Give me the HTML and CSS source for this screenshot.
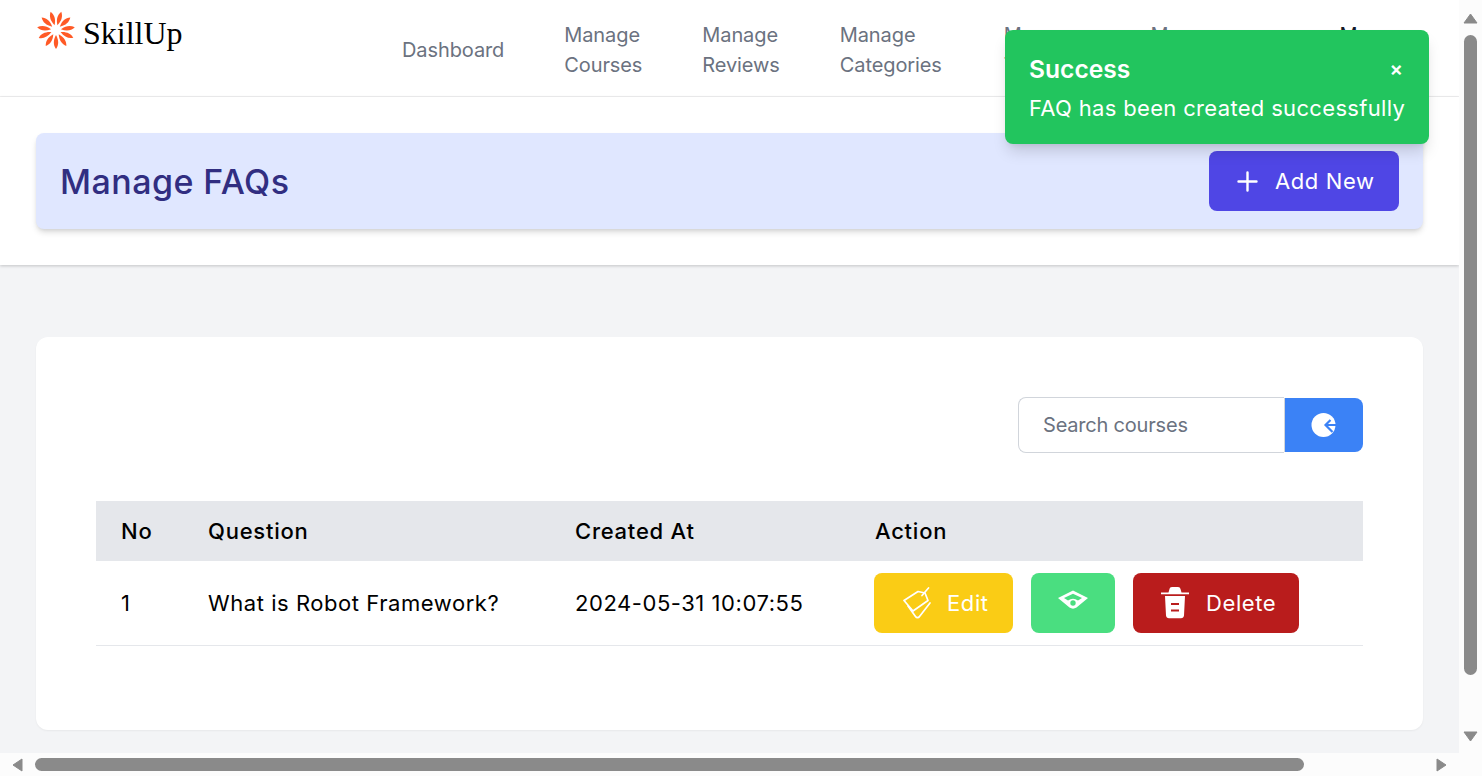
FILE: index.html
```html
<!DOCTYPE html>
<html lang="en">
<head>
<meta charset="utf-8">
<title>Manage FAQs</title>
<link rel="stylesheet" href="styles.css">
</head>
<body>
<div class="window">
  <div class="page">
    <nav class="topnav">
      <a class="brand">
        <svg class="brand-mark" viewBox="0 0 38 38" width="38" height="38" aria-hidden="true">
          <g fill="#ff5a26" transform="rotate(180 19 19)">
            <path d="M19 0c2.800 4 3 8.500 0 14c-3-5.500-2.800-10 0-14z"/>
            <path transform="rotate(32.7 19 19)" d="M19 0c2.800 4 3 8.500 0 14c-3-5.500-2.800-10 0-14z"/>
            <path transform="rotate(65.4 19 19)" d="M19 0c2.800 4 3 8.500 0 14c-3-5.500-2.800-10 0-14z"/>
            <path transform="rotate(98.1 19 19)" d="M19 0c2.800 4 3 8.500 0 14c-3-5.500-2.800-10 0-14z"/>
            <path transform="rotate(130.8 19 19)" d="M19 0c2.800 4 3 8.500 0 14c-3-5.500-2.800-10 0-14z"/>
            <path transform="rotate(163.5 19 19)" d="M19 0c2.800 4 3 8.500 0 14c-3-5.500-2.800-10 0-14z"/>
            <path transform="rotate(196.2 19 19)" d="M19 0c2.800 4 3 8.500 0 14c-3-5.500-2.800-10 0-14z"/>
            <path transform="rotate(228.9 19 19)" d="M19 0c2.800 4 3 8.500 0 14c-3-5.500-2.800-10 0-14z"/>
            <path transform="rotate(261.6 19 19)" d="M19 0c2.800 4 3 8.500 0 14c-3-5.500-2.800-10 0-14z"/>
            <path transform="rotate(294.3 19 19)" d="M19 0c2.800 4 3 8.500 0 14c-3-5.500-2.800-10 0-14z"/>
            <path transform="rotate(327 19 19)" d="M19 0c2.800 4 3 8.500 0 14c-3-5.500-2.800-10 0-14z"/>
          </g>
        </svg>
        <span class="brand-name">SkillUp</span>
      </a>
      <ul class="nav-links">
        <li class="nav-single">Dashboard</li>
        <li>Manage<br>Courses</li>
        <li>Manage<br>Reviews</li>
        <li class="nav-cat">Manage<br>Categories</li>
        <li>Manage<br>Teachers</li>
        <li class="nav-wide">Manage<br>Testimonials</li>
        <li class="nav-current">Manage<br>FAQs</li>
      </ul>
    </nav>

    <header class="title-band">
      <div class="title-card">
        <h1>Manage FAQs</h1>
        <button class="btn btn-add">
          <svg viewBox="0 0 24 24" width="24" height="24" aria-hidden="true"><path d="M12.500 3.500v18M3.500 12.500h18" stroke="#fff" stroke-width="2.400" stroke-linecap="round" fill="none"/></svg>
          Add New
        </button>
      </div>
    </header>

    <main class="content">
      <section class="panel">
        <div class="search-row">
          <div class="search">
            <span class="search-input">Search courses</span>
            <button class="search-btn" aria-label="Search">
              <svg viewBox="0 0 28 28" width="28" height="28" aria-hidden="true">
                <circle cx="13.500" cy="14" r="12" fill="#fff"/>
                <path d="M27 14H15.500M20.500 9l-5 5 7 7" stroke="#3b82f6" stroke-width="2.200" fill="none"/>
              </svg>
            </button>
          </div>
        </div>
        <table class="faq-table">
          <thead>
            <tr><th class="col-no">No</th><th class="col-q">Question</th><th class="col-date">Created At</th><th>Action</th></tr>
          </thead>
          <tbody>
            <tr>
              <td>1</td>
              <td>What is Robot Framework?</td>
              <td>2024-05-31 10:07:55</td>
              <td>
                <div class="actions">
                  <button class="btn btn-edit">
                    <svg viewBox="0 0 30 32" width="30" height="32" aria-hidden="true" fill="none" stroke="#fff" stroke-width="1.700" stroke-linejoin="round" stroke-linecap="round">
                      <path d="M1 13.500L15 4.500l7 1.500 3 7.500-15 10.500z"/>
                      <path d="M19 8.500L25.500 1"/>
                      <path d="M5 19l7.500 10.500c1 1.500 3 1.500 4 0L27 16"/>
                    </svg>
                    Edit
                  </button>
                  <button class="btn btn-view" aria-label="View">
                    <svg viewBox="6 8 34 24" width="34" height="24" aria-hidden="true">
                      <path fill="#fff" fill-rule="evenodd" d="M8 18L23 10.500 38 18 26.500 27.500Q23 29.800 19.500 27.500zM14 18L18 20.500Q23 17 28 20.500L32 18 23 13.700z"/>
                      <circle cx="23" cy="23" r="2.700" fill="#4ade80"/>
                    </svg>
                  </button>
                  <button class="btn btn-delete">
                    <svg viewBox="8 7 30 32" width="30" height="32" aria-hidden="true">
                      <path fill="#fff" d="M9 12.500h7.500L17.500 9C17.800 7.800 18.500 7 20 7h6c1.500 0 2.200.8 2.500 2l1 3.500H37v1.700H9zM13 16h20l-1 19.500c-.1 1.600-1.300 2.800-3 2.800H17c-1.700 0-2.900-1.200-3-2.800z"/>
                      <path d="M19 24h8M19 30.500h8" stroke="#b91c1c" stroke-width="1.800"/>
                    </svg>
                    Delete
                  </button>
                </div>
              </td>
            </tr>
          </tbody>
        </table>
      </section>
    </main>

    <aside class="toast">
      <div class="toast-body">
        <strong>Success</strong>
        <p>FAQ has been created successfully</p>
      </div>
      <span class="toast-close">×</span>
    </aside>
  </div>

  <div class="vbar">
    <svg class="arrow" viewBox="0 0 15 11" width="15" height="11"><path d="M7.500 1L14 10H1z" fill="#8a8a8a" stroke="#8a8a8a" stroke-linejoin="round"/></svg>
    <div class="vtrack"><div class="vthumb"></div></div>
    <svg class="arrow" viewBox="0 0 15 11" width="15" height="11"><path d="M1 1H14L7.500 10z" fill="#8a8a8a" stroke="#8a8a8a" stroke-linejoin="round"/></svg>
  </div>
  <div class="hbar">
    <svg class="arrow" viewBox="0 0 11 14" width="11" height="14"><path d="M1 7L10 1v12z" fill="#8a8a8a" stroke="#8a8a8a" stroke-linejoin="round"/></svg>
    <div class="htrack"><div class="hthumb"></div></div>
    <svg class="arrow" viewBox="0 0 11 14" width="11" height="14"><path d="M10 7L1 1v12z" fill="#8a8a8a" stroke="#8a8a8a" stroke-linejoin="round"/></svg>
  </div>
  <div class="corner"></div>
</div>
</body>
</html>
```
FILE: styles.css
```css
* { box-sizing: border-box; }
html, body { margin: 0; height: 100%; overflow: hidden; }
body { font-family: "Inter", "Liberation Sans", sans-serif; color: #000; background: #fcfcfc; }

.window {
  display: grid;
  grid-template-columns: 1459px 23px;
  grid-template-rows: 753px 23px;
  width: 1482px;
  height: 776px;
}

.page { position: relative; overflow: hidden; background: #f3f4f6; }

.topnav {
  display: flex;
  height: 97px;
  background: #fff;
  border-bottom: 1px solid #f0f0f1;
  padding-left: 37px;
  overflow: hidden;
}
.brand { display: flex; align-items: flex-start; gap: 8px; padding-top: 11px; width: 365px; flex: none; }
.brand-mark { flex: none; }
.brand-name { font-family: "Liberation Serif", serif; font-size: 32px; line-height: 47px; margin-top: -1px; color: #000; }
.nav-links {
  display: flex;
  list-style: none;
  margin: 0;
  padding: 20px 0 0;
  font-size: 20px;
  line-height: 30px;
  letter-spacing: -.1px;
  color: #6b7280;
  gap: 60px;
  white-space: nowrap;
}
.nav-single { padding-top: 15px; }
.nav-cat { min-width: 104px; }
.nav-wide { min-width: 129px; }
.nav-current { color: #111827; }

.title-band {
  height: 168px;
  padding: 36px 36px 0;
  background: #fff;
  box-shadow: 0 1px 3px rgba(0,0,0,.2);
  position: relative;
}
.title-card {
  height: 96px;
  display: flex;
  align-items: center;
  justify-content: space-between;
  padding: 0 24px;
  background: #e0e7ff;
  border-radius: 8px;
  box-shadow: 0 4px 6px -1px rgba(0,0,0,.15), 0 2px 4px -2px rgba(0,0,0,.1);
}
.title-card h1 { margin: 0; font-size: 34px; font-weight: 500; letter-spacing: .45px; color: #312e81; }

.btn {
  display: inline-flex;
  align-items: center;
  justify-content: flex-start;
  height: 60px;
  border: 0;
  border-radius: 8px;
  font: inherit;
  font-size: 22px;
  letter-spacing: .6px;
  color: #fff;
}
.btn-add { width: 190px; gap: 16px; padding: 0 0 0 26px; background: #4f46e5; }

.content { padding: 72px 36px 0; }
.panel { height: 393px; padding: 60px; background: #fff; border-radius: 12px; box-shadow: 0 1px 2px rgba(0,0,0,.05); }

.search-row { display: flex; justify-content: flex-end; margin-bottom: 48px; }
.search { display: flex; width: 345px; height: 56px; }
.search-input {
  flex: 1;
  padding-left: 24px;
  border: 1px solid #d1d5db;
  border-right: 0;
  border-radius: 8px 0 0 8px;
  font-size: 20px;
  line-height: 54px;
  letter-spacing: -.2px;
  color: #6b7280;
}
.search-btn {
  width: 79px;
  height: 54px;
  margin-top: 1px;
  border: 0;
  border-left: 1px solid #d1d5db;
  border-radius: 0 8px 8px 0;
  background: #3b82f6;
  display: flex;
  align-items: center;
  justify-content: center;
  padding: 0;
}

.faq-table { width: 100%; border-collapse: collapse; font-size: 22px; table-layout: fixed; }
.faq-table th { height: 60px; padding: 0 24px 0 25px; background: #e5e7eb; font-weight: 500; letter-spacing: .75px; text-align: left; }
.faq-table td { height: 84px; padding: 0 24px 0 25px; border-bottom: 1px solid #e5e7eb; letter-spacing: .55px; }
.col-no { width: 87px; }
.col-q { width: 367px; }
.col-date { width: 300px; }

.actions { display: flex; gap: 18px; margin-left: -1px; }
.btn-edit { width: 139px; gap: 14px; padding: 0 0 0 29px; background: #facc15; }
.btn-view { width: 84px; background: #4ade80; align-items: flex-start; justify-content: center; padding: 15px 0 0; }
.btn-delete { width: 166px; gap: 16px; padding: 0 0 0 27px; background: #b91c1c; }

.toast {
  position: absolute;
  top: 30px;
  left: 1005px;
  width: 424px;
  height: 114px;
  padding: 20px 24px;
  background: #22c55e;
  border-radius: 8px;
  color: #fff;
  box-shadow: 0 10px 15px -3px rgba(0,0,0,.15), 0 4px 6px -4px rgba(0,0,0,.1);
}
.toast-body strong { display: block; font-size: 24.600px; line-height: 38px; font-weight: 600; }
.toast-body p { margin: 1px 0 0; font-size: 22px; line-height: 38px; letter-spacing: .33px; white-space: nowrap; }
.toast-close { position: absolute; top: 20px; right: 26px; font-size: 20px; line-height: 38px; font-weight: 600; }

.vbar { display: flex; flex-direction: column; align-items: center; padding: 13px 0 11px; background: #fcfcfc; grid-row: 1; grid-column: 2; }
.vtrack { flex: 1; width: 100%; padding-top: 11px; }
.vthumb { width: 13px; height: 640px; background: #8a8a8a; border-radius: 7px; margin: 0 auto; }

.hbar { display: flex; align-items: center; padding: 0 12px; background: #fcfcfc; grid-row: 2; grid-column: 1; }
.htrack { flex: 1; padding-left: 12px; }
.hthumb { width: 1269px; height: 13px; background: #8a8a8a; border-radius: 7px; }
.corner { background: #fcfcfc; grid-row: 2; grid-column: 2; }
.arrow { flex: none; }
```
